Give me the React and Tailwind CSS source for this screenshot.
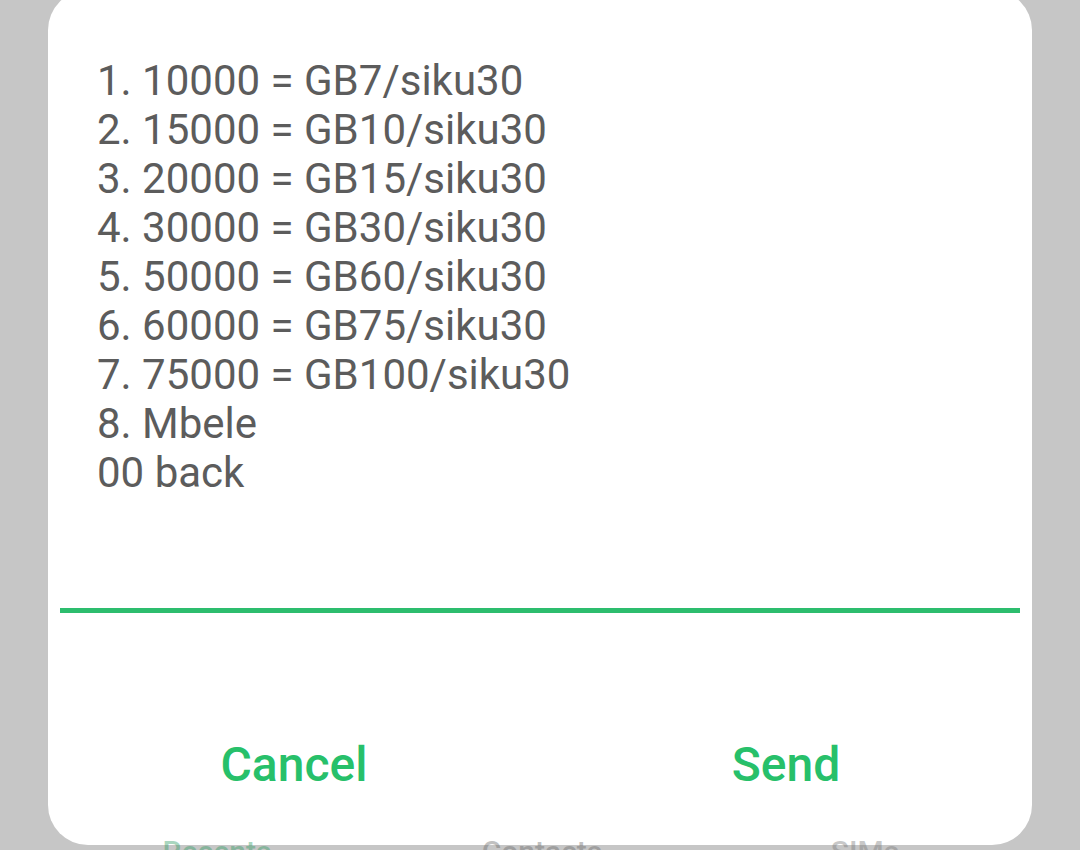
import React from "react";

const lines = [
  "1. 10000 = GB7/siku30",
  "2. 15000 = GB10/siku30",
  "3. 20000 = GB15/siku30",
  "4. 30000 = GB30/siku30",
  "5. 50000 = GB60/siku30",
  "6. 60000 = GB75/siku30",
  "7. 75000 = GB100/siku30",
  "8. Mbele",
  "00 back",
];

export default function App() {
  return (
    <div
      className="relative w-[1080px] h-[850px] overflow-hidden bg-[#c6c6c6]"
      style={{ fontFamily: "Roboto, 'Noto Sans', sans-serif" }}
    >
      <div className="mx-[48px] mt-[-10px] h-[855px] rounded-[40px] bg-white flex flex-col">
        <div className="pt-[66px] pl-[49px] text-[42px] leading-[49px] text-[#5c5c5c]">
          {lines.map((l) => (
            <div key={l}>{l}</div>
          ))}
        </div>
        <div className="mt-[111px] mx-[12px] h-[5px] bg-[#2dbd6e]" />
        <div className="mt-[102px] h-[100px] flex items-center text-[#27c06a] text-[48px] font-medium">
          <div className="flex-1 text-center">Cancel</div>
          <div className="flex-1 text-center">Send</div>
        </div>
      </div>
      <div className="absolute left-0 top-[837px] w-[1080px] h-[13px] overflow-hidden opacity-40 pointer-events-none">
        <div className="flex text-[30px] font-medium leading-[30px]">
          <div className="w-[434px] text-center text-[#2a9a60]">Recents</div>
          <div className="w-[216px] text-center text-[#666]">Contacts</div>
          <div className="w-[430px] text-center text-[#777]">SIMs</div>
        </div>
      </div>
    </div>
  );
}
